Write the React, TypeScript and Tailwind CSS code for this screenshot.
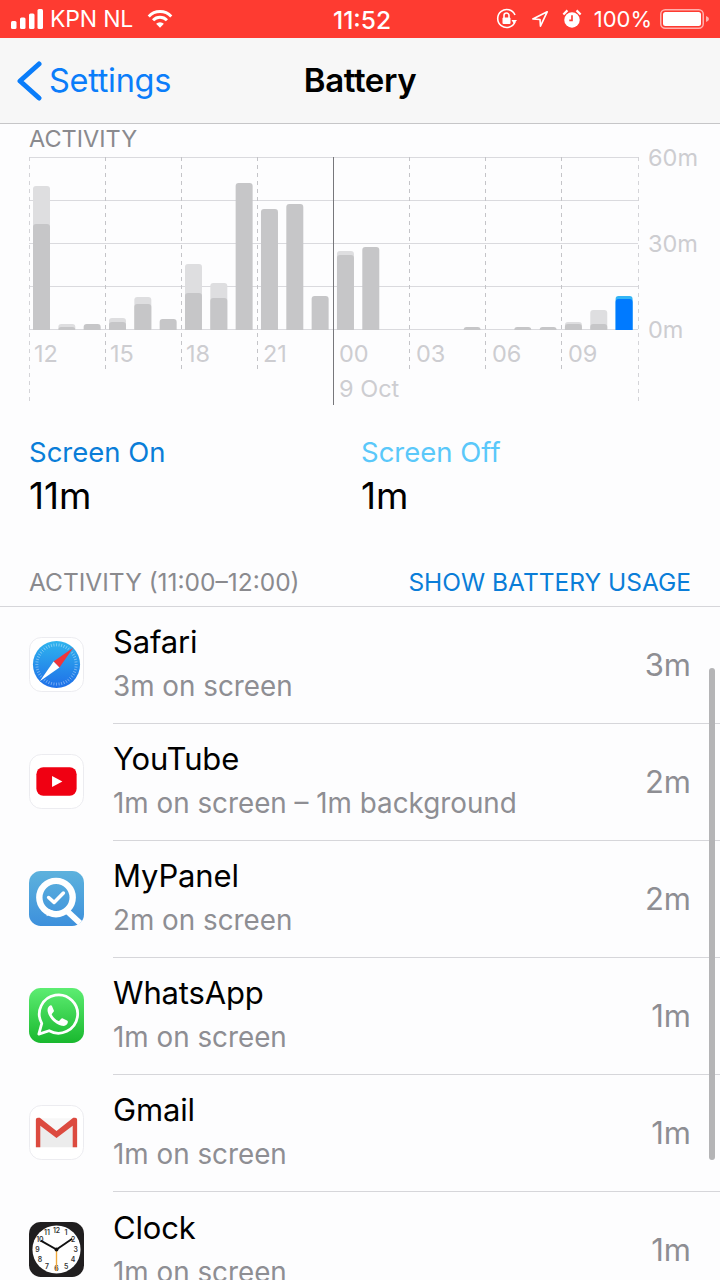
import { ReactNode } from "react";

const FONT = "font-['Inter','Liberation_Sans',sans-serif]";

// dark top and light top in chart y, baseline at 330
const BARS: { i: number; dark: number; light?: number; blue?: boolean }[] = [
  { i: 0, dark: 224, light: 186 },
  { i: 1, dark: 327, light: 324 },
  { i: 2, dark: 324 },
  { i: 3, dark: 322, light: 318 },
  { i: 4, dark: 304, light: 297 },
  { i: 5, dark: 319 },
  { i: 6, dark: 293, light: 264 },
  { i: 7, dark: 298, light: 283 },
  { i: 8, dark: 183 },
  { i: 9, dark: 209 },
  { i: 10, dark: 204 },
  { i: 11, dark: 296 },
  { i: 12, dark: 255, light: 251 },
  { i: 13, dark: 247 },
  { i: 17, dark: 327 },
  { i: 19, dark: 327 },
  { i: 20, dark: 327 },
  { i: 21, dark: 324, light: 322 },
  { i: 22, dark: 324, light: 310 },
  { i: 23, dark: 299, light: 296, blue: true },
];

const APPS = [
  { name: "Safari", sub: "3m on screen", time: "3m", icon: <SafariIcon /> },
  { name: "YouTube", sub: "1m on screen – 1m background", time: "2m", icon: <YouTubeIcon /> },
  { name: "MyPanel", sub: "2m on screen", time: "2m", icon: <MyPanelIcon /> },
  { name: "WhatsApp", sub: "1m on screen", time: "1m", icon: <WhatsAppIcon /> },
  { name: "Gmail", sub: "1m on screen", time: "1m", icon: <GmailIcon /> },
  { name: "Clock", sub: "1m on screen", time: "1m", icon: <ClockIcon /> },
];

function IconBox({ children }: { children: ReactNode }) {
  return <svg viewBox="0 0 56 56" className="w-[55px] h-[55px] -mt-[3px] shrink-0">{children}</svg>;
}

function SafariIcon() {
  const ticks = Array.from({ length: 48 }, (_, n) => n * 7.5);
  return (
    <IconBox>
      <defs>
        <linearGradient id="saf" x1="0" y1="0" x2="0" y2="1">
          <stop offset="0" stopColor="#2fb4ee" />
          <stop offset="1" stopColor="#1f6fe8" />
        </linearGradient>
      </defs>
      <rect x="0.5" y="0.5" width="55" height="55" rx="12" fill="#fff" stroke="#ececf0" />
      <circle cx="28" cy="28" r="24" fill="url(#saf)" />
      {ticks.map((a) => (
        <line key={a} x1="28" y1="6.5" x2="28" y2="9.5" stroke="#fff" strokeOpacity="0.6" strokeWidth="0.6" transform={`rotate(${a} 28 28)`} />
      ))}
      <polygon points="45,11 31,31 25,25" fill="#f0353a" />
      <polygon points="11,45 31,31 25,25" fill="#fff" />
    </IconBox>
  );
}

function YouTubeIcon() {
  return (
    <IconBox>
      <rect x="0.5" y="0.5" width="55" height="55" rx="12" fill="#fff" stroke="#ececf0" />
      <rect x="7.5" y="13.5" width="41" height="29" rx="7" fill="#f00012" />
      <polygon points="23.5,22.5 23.5,33.5 34,28" fill="#fff" />
    </IconBox>
  );
}

function MyPanelIcon() {
  return (
    <IconBox>
      <defs>
        <linearGradient id="mp" x1="0" y1="0" x2="0" y2="1">
          <stop offset="0" stopColor="#5db2dd" />
          <stop offset="1" stopColor="#3d90dc" />
        </linearGradient>
      </defs>
      <rect width="56" height="56" rx="12" fill="url(#mp)" />
      <circle cx="27.5" cy="27" r="17" fill="none" stroke="#fff" strokeWidth="6.5" />
      <line x1="38" y1="40" x2="52" y2="53" stroke="#fff" strokeWidth="6" />
      <path d="M18 38 L18 46 L26 41 Z" fill="#fff" />
      <path d="M20 27 L25.5 32 L35 22.5" fill="none" stroke="#fff" strokeWidth="3.6" strokeLinecap="round" strokeLinejoin="round" />
    </IconBox>
  );
}

function WhatsAppIcon() {
  return (
    <IconBox>
      <defs>
        <linearGradient id="wa" x1="0" y1="0" x2="0" y2="1">
          <stop offset="0" stopColor="#5ded72" />
          <stop offset="1" stopColor="#19b82e" />
        </linearGradient>
      </defs>
      <rect width="56" height="56" rx="12" fill="url(#wa)" />
      <path d="M10 47 L13 36 A19.5 19.5 0 1 1 20.5 43.5 Z" fill="none" stroke="#fff" strokeWidth="2.8" strokeLinejoin="round" />
      <path d="M22 17.5 C19.5 18.5 18.5 21 19 24 C20 30 27 37.5 33.5 38.5 C36.5 39 39 37.5 39.5 35 C39.7 34 39.5 33.5 38.7 33 L34.5 31 C33.7 30.6 33.2 30.8 32.7 31.4 L31.2 33.2 C30.7 33.7 30.2 33.7 29.6 33.4 C27 32.2 24.7 29.7 23.4 27.4 C23 26.8 23.1 26.4 23.6 25.9 L25 24.3 C25.4 23.8 25.5 23.3 25.2 22.7 L23.4 18.4 C23.1 17.6 22.6 17.3 22 17.5 Z" fill="#fff" />
    </IconBox>
  );
}

function GmailIcon() {
  return (
    <IconBox>
      <rect x="0.5" y="0.5" width="55" height="55" rx="12" fill="#fff" stroke="#ececf0" />
      <polygon points="7,14 49,14 49,43 7,43" fill="#ececec" />
      <polygon points="7,14 49,14 28,30" fill="#f7f7f7" />
      <path d="M7 43 L7 15 Q7 13 9 13 L11 13 L28 26.5 L45 13 L47 13 Q49 13 49 15 L49 43 L44.5 43 L44.5 21 L28 33.5 L11.5 21 L11.5 43 Z" fill="#dc4a3f" />
    </IconBox>
  );
}

function ClockIcon() {
  const nums = [12, 1, 2, 3, 4, 5, 6, 7, 8, 9, 10, 11];
  return (
    <IconBox>
      <rect width="56" height="56" rx="12" fill="#201e1f" />
      <circle cx="28" cy="28" r="24.5" fill="#fff" />
      {nums.map((n, idx) => {
        const a = (idx * Math.PI) / 6;
        return (
          <text key={n} x={28 + 19.5 * Math.sin(a)} y={28 - 19.5 * Math.cos(a) + 2.6} fontSize="7" fontWeight="600" textAnchor="middle" fill="#333" fontFamily="Inter, sans-serif">
            {n}
          </text>
        );
      })}
      <line x1="28" y1="28" x2="28" y2="50" stroke="#f0a93a" strokeWidth="1.4" />
      <line x1="28" y1="28" x2="12" y2="19" stroke="#111" strokeWidth="2" />
      <line x1="28" y1="28" x2="44" y2="17" stroke="#111" strokeWidth="2" />
      <circle cx="28" cy="28" r="2" fill="#111" />
    </IconBox>
  );
}

function barPath(x: number, top: number, base: number) {
  return `M${x} ${base} V${top + 3} Q${x} ${top} ${x + 3} ${top} H${x + 14} Q${x + 17} ${top} ${x + 17} ${top + 3} V${base} Z`;
}

function Chart() {
  const minor = [105, 181, 257, 409, 485, 561];
  const labels = [
    { x: 34, t: "12" },
    { x: 110, t: "15" },
    { x: 186, t: "18" },
    { x: 263, t: "21" },
    { x: 339, t: "00" },
    { x: 416, t: "03" },
    { x: 492, t: "06" },
    { x: 568, t: "09" },
  ];
  const base = 330;
  return (
    <svg width="720" height="266" viewBox="0 140 720 266" className="block -mt-[8px]">
      {[157, 200, 243, 286, 329].map((y) => (
        <line key={y} x1="29" x2="638" y1={y + 0.5} y2={y + 0.5} stroke="#dadade" strokeWidth="1.2" />
      ))}
      {minor.map((x) => (
        <line key={x} x1={x + 0.5} x2={x + 0.5} y1="157" y2="373" stroke="#c4c4c8" strokeDasharray="4 4" />
      ))}
      {[29, 638].map((x) => (
        <line key={x} x1={x + 0.5} x2={x + 0.5} y1="157" y2="405" stroke="#d4d4d8" strokeDasharray="4 4" />
      ))}
      <line x1="333.5" x2="333.5" y1="157" y2="405" stroke="#77777b" />
      {BARS.map((b) => {
        const x = 33 + b.i * 25.33;
        return (
          <g key={b.i}>
            {b.light && <path d={barPath(x, b.light, base)} fill={b.blue ? "#34b5f5" : "#dedee0"} />}
            <path d={barPath(x, b.dark, base)} fill={b.blue ? "#007aff" : "#c6c6c8"} />
          </g>
        );
      })}
      <g fill="#cdcdd1" fontSize="23.5" fontFamily="Inter, sans-serif">
        {labels.map((l) => (
          <text key={l.t} x={l.x} y="362">{l.t}</text>
        ))}
        <text x="339" y="397">9 Oct</text>
        <text x="648" y="166">60m</text>
        <text x="648" y="252">30m</text>
        <text x="648" y="338">0m</text>
      </g>
    </svg>
  );
}

function StatusBar() {
  return (
    <div className="h-[38px] shrink-0 bg-[#fe3b31] text-white flex items-center justify-between pl-[11px] pr-[10px] relative">
      <div className="flex items-center">
        <svg width="32" height="22" viewBox="0 0 32 22" fill="#fff">
          <rect x="0" y="13" width="5.5" height="8" rx="1.5" />
          <rect x="9" y="9.5" width="5.5" height="11.5" rx="1.5" />
          <rect x="18" y="5.5" width="5.5" height="15.5" rx="1.5" />
          <rect x="26.5" y="1" width="5.5" height="20" rx="1.5" />
        </svg>
        <span className="text-[23px] leading-none ml-[7px] tracking-[-0.2px]">KPN NL</span>
        <svg width="26" height="20" viewBox="0 0 30 22" fill="none" stroke="#fff" strokeWidth="3.4" className="ml-[14px]">
          <path d="M2 8 A18 18 0 0 1 28 8" />
          <path d="M7 12.5 A11 11 0 0 1 23 12.5" />
          <path d="M15 21 L10.5 16.5 A6.5 6.5 0 0 1 19.5 16.5 Z" fill="#fff" stroke="none" />
        </svg>
      </div>
      <span className="absolute left-[333px] top-[7px] text-[24.5px] leading-[26px] font-medium">11:52</span>
      <div className="flex items-center">
        <svg width="22" height="24" viewBox="0 0 22 24" fill="none" stroke="#fff" strokeWidth="1.6">
          <path d="M19 15 A9 9 0 1 1 19 8" />
          <path d="M21 13 L18 17 L15.5 13 Z" fill="#fff" stroke="none" />
          <rect x="6.5" y="10.5" width="8" height="6.5" rx="1" fill="#fff" stroke="none" />
          <path d="M8 11 V8.5 A2.5 2.5 0 0 1 13 8.5 V11" />
        </svg>
        <svg width="18" height="18" viewBox="0 0 20 20" fill="none" stroke="#fff" strokeWidth="1.8" strokeLinejoin="round" className="ml-[13px]">
          <path d="M18 2 L2 10 L10 10.5 L10.5 18 Z" />
        </svg>
        <svg width="20" height="22" viewBox="0 0 22 24" fill="#fff" className="ml-[13px]">
          <circle cx="11" cy="13" r="8.5" />
          <path d="M11 8 V13.5 L8 13.5" fill="none" stroke="#fe3b31" strokeWidth="1.8" />
          <path d="M1.5 7 L6 2.5 M20.5 7 L16 2.5" stroke="#fff" strokeWidth="2.4" />
        </svg>
        <span className="text-[22px] leading-none ml-[12px]">100%</span>
        <svg width="50" height="26" viewBox="0 0 50 26" fill="none" className="ml-[8px]">
          <rect x="0.75" y="3.75" width="42.5" height="18.5" rx="4.5" stroke="#fff" strokeOpacity="0.6" strokeWidth="1.5" />
          <rect x="3" y="6" width="38" height="14" rx="2.5" fill="#fff" />
          <path d="M46 10 Q49 11 49 13 Q49 15 46 16 Z" fill="#fff" fillOpacity="0.6" />
        </svg>
      </div>
    </div>
  );
}

export default function App() {
  return (
    <div className={`${FONT} w-[720px] h-[1280px] overflow-hidden relative bg-[#fdfdfe] flex flex-col`}>
      <StatusBar />

      <div className="h-[86px] shrink-0 bg-[#f7f7f7] border-b border-[#c6c6c8] flex items-center justify-between relative">
        <div className="flex items-center pl-[16px]">
          <svg width="27" height="40" viewBox="0 0 27 40" fill="none" stroke="#0a7dfa" strokeWidth="5" strokeLinecap="round" strokeLinejoin="round">
            <path d="M23 3 L4 20 L23 37" />
          </svg>
          <span className="text-[32.5px] leading-none text-[#0a7dfa] ml-[6px] pt-[2px] tracking-[-0.3px]">Settings</span>
        </div>
        <span className="absolute left-0 right-0 text-center text-[33px] leading-none font-semibold text-black tracking-[-0.4px]">Battery</span>
      </div>

      <div className="h-[24px] pl-[29px] pt-[1px] shrink-0 text-[23.5px] leading-[27px] text-[#8a8a8e]">ACTIVITY</div>

      <div className="shrink-0">
        <Chart />
      </div>

      <div className="flex pl-[29px] pt-[28px] shrink-0">
        <div className="w-[332px]">
          <div className="text-[27.5px] leading-[36px] text-[#0a7dd8]">Screen On</div>
          <div className="text-[37px] leading-[44px] mt-[4px] text-black">11m</div>
        </div>
        <div>
          <div className="text-[27.5px] leading-[36px] text-[#5ac8fa]">Screen Off</div>
          <div className="text-[37px] leading-[44px] mt-[4px] text-black">1m</div>
        </div>
      </div>

      <div className="flex justify-between items-center px-[29px] h-[40px] mt-[44px] shrink-0 text-[24.5px]">
        <span className="text-[#8a8a8e]">ACTIVITY (11:00–12:00)</span>
        <span className="text-[#0a7dd8]">SHOW BATTERY USAGE</span>
      </div>

      <div className="border-t border-[#d6d6da] mt-[4px] shrink-0">
        {APPS.map((a, n) => (
          <div key={a.name} className="flex items-center h-[117px] pl-[29px]">
            {a.icon}
            <div className={`flex-1 flex items-center h-full ml-[29px] pr-[29px] ${n < APPS.length - 1 ? "border-b border-[#d6d6da]" : ""}`}>
              <div className="flex-1 pb-[2px]">
                <div className="text-[31px] leading-[38px] text-black tracking-[-0.15px]">{a.name}</div>
                <div className="text-[27.8px] leading-[38px] mt-[6px] text-[#8e8e93]">{a.sub}</div>
              </div>
              <span className="text-[31px] text-[#8e8e93]">{a.time}</span>
            </div>
          </div>
        ))}
      </div>

      <div className="absolute left-[709px] top-[668px] w-[6px] h-[492px] rounded-full bg-[#b4b4b6]" />
    </div>
  );
}
